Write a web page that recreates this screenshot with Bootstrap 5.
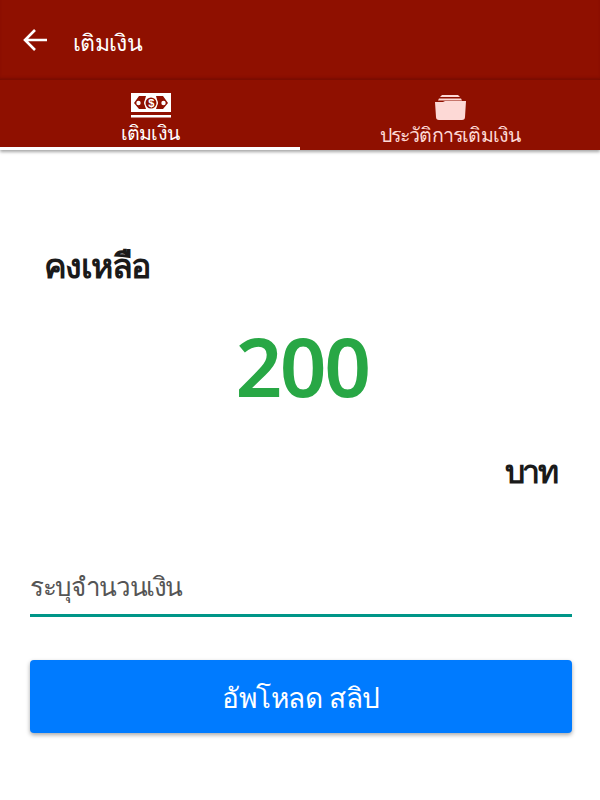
<!DOCTYPE html>
<html lang="th">
<head>
  <meta charset="UTF-8">
  <meta name="viewport" content="width=device-width, initial-scale=1.0">
  <title>เติมเงิน</title>
  <link rel="stylesheet" href="https://cdn.jsdelivr.net/npm/bootstrap@5.3.3/dist/css/bootstrap.min.css">
  <style>
    body {
      font-family: "Noto Sans", "Open Sans", "DejaVu Sans", sans-serif;
      background-color: #fff;
      width: 600px;
      height: 800px;
      overflow: hidden;
    }

    /* แถบหัวข้อ */
    .top-bar {
      height: 80px;
      background-color: #8f1000;
      color: #fff;
      padding-left: 23px;
      padding-top: 4px;
      box-shadow: inset 0 -3px 3px -1px #7a0d00;
    }
    .top-bar svg { margin-right: 25px; margin-top: -4px; }
    .top-title { font-size: 23px; letter-spacing: -.7px; }

    /* แท็บ */
    .tab-bar {
      height: 70px;
      background-color: #8f1000;
      box-shadow: 0 2px 3px rgba(0, 0, 0, .35);
    }
    .tab-item {
      width: 300px;
      height: 70px;
      padding-top: 13px;
      border: 0;
      background: none;
      font-size: 19.5px;
      line-height: 26px;
      letter-spacing: -.8px;
    }
    .tab-item svg { display: block; margin: 0 auto 2px; }
    .tab-on { color: #fff; border-bottom: 3px solid #fff; }
    .tab-on svg { position: relative; left: 1px; }
    .tab-off { color: #fdd9d6; }

    /* ยอดเงิน */
    .balance-box { padding: 92px 30px 0 44px; }
    .balance-label {
      font-size: 34px;
      line-height: 46px;
      font-weight: 700;
      color: #1a1a1a;
      letter-spacing: -1.6px;
    }
    .balance-amount {
      font-size: 82px;
      line-height: 100px;
      font-weight: 600;
      color: #28a745;
      letter-spacing: -2.5px;
      margin-top: 27px;
      margin-right: 10px;
    }
    .balance-unit {
      font-size: 32px;
      line-height: 46px;
      font-weight: 700;
      color: #1a1a1a;
      letter-spacing: -2.5px;
      margin-top: 33px;
      padding-right: 14px;
    }

    /* ฟอร์ม */
    .topup-form { padding: 0 28px 0 30px; margin-top: 73px; }
    .amount-input {
      height: 50px;
      padding: 0 0 10px;
      border: 0;
      border-bottom: 3px solid #009688;
      border-radius: 0;
      font-size: 26px;
      letter-spacing: -1.4px;
      color: #555;
    }
    .amount-input::placeholder { color: #555; opacity: 1; }
    .upload-btn {
      height: 73px;
      margin-top: 43px;
      background-color: #007bff;
      border: 0;
      border-radius: 4px;
      font-size: 28px;
      letter-spacing: -.5px;
      color: #fff;
      box-shadow: 0 2px 4px rgba(0, 0, 0, .35);
    }
  </style>
</head>
<body>
  <div class="top-bar d-flex align-items-center">
    <svg width="25" height="24" viewBox="0 0 25 24" fill="none" stroke="#fff" stroke-width="2.6">
      <path d="M24 12H2M12 2 2 12l10 10"/>
    </svg>
    <span class="top-title">เติมเงิน</span>
  </div>

  <div class="tab-bar d-flex">
    <button type="button" class="tab-item tab-on text-center">
      <svg width="40" height="25" viewBox="0 0 40 25">
        <rect y="0" width="40" height="19" fill="#fff"/>
        <rect y="22" width="40" height="2.5" fill="#fff"/>
        <path d="M3 10 8 3h7l-2 7 2 6H8zM37 10 32 3h-7l2 7-2 6h7z" fill="#8f1000"/>
        <circle cx="20" cy="10" r="6.5" fill="#fff"/>
        <circle cx="20" cy="10" r="5.5" fill="#8f1000"/>
        <circle cx="7.5" cy="10" r="2.2" fill="#fff"/>
        <circle cx="32.5" cy="10" r="2.2" fill="#fff"/>
        <text x="20" y="14" font-size="11" font-weight="700" text-anchor="middle" fill="#fff" font-family="Liberation Sans, sans-serif">$</text>
      </svg>
      เติมเงิน
    </button>
    <button type="button" class="tab-item tab-off text-center">
      <svg width="32" height="25" viewBox="0 0 32 25">
        <path d="M8 0h16l2 2H6z" fill="#fdd9d6"/>
        <path d="M5 3.5h22l1 2H4z" fill="#fdd9d6"/>
        <path d="M1 7h8l2-1h21l-1 16a3 3 0 0 1-3 3H5a3 3 0 0 1-3-3z" fill="#fdd9d6"/>
      </svg>
      ประวัติการเติมเงิน
    </button>
  </div>

  <div class="balance-box">
    <div class="balance-label">คงเหลือ</div>
    <div class="balance-amount text-center">200</div>
    <div class="balance-unit text-end">บาท</div>
  </div>

  <form class="topup-form d-flex flex-column">
    <input type="text" class="form-control amount-input shadow-none" placeholder="ระบุจำนวนเงิน">
    <button type="button" class="btn upload-btn w-100">อัพโหลด สลิป</button>
  </form>
</body>
</html>
